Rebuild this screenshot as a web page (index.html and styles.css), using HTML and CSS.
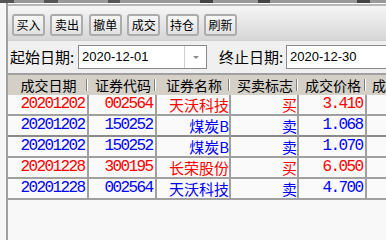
FILE: index.html
```html
<html>
<head>
    <meta charset="utf-8">
    <link rel="stylesheet" href="styles.css">
</head>
<body>
    <div class="tabs"></div>
    <div class="frame">
        <div class="side"></div>
        <div class="main">
            <div class="toolbar">
                <button class="tool">买入</button>
                <button class="tool">卖出</button>
                <button class="tool">撤单</button>
                <button class="tool">成交</button>
                <button class="tool">持仓</button>
                <button class="tool">刷新</button>
            </div>
            <div class="filter">
                <span class="label">起始日期:</span>
                <div class="combo">
                    <span class="value">2020-12-01</span>
                    <span class="drop"><i class="arrow"></i></span>
                </div>
                <span class="label label-end">终止日期:</span>
                <div class="date-box">
                    <span class="value">2020-12-30</span>
                </div>
            </div>
            <div class="grid">
                <div class="grid-head">
                    <div class="th">成交日期</div>
                    <div class="th">证券代码</div>
                    <div class="th">证券名称</div>
                    <div class="th">买卖标志</div>
                    <div class="th">成交价格</div>
                    <div class="th">成交数量</div>
                </div>
                <div class="grid-row buy">
                    <div class="td num">20201202</div>
                    <div class="td num">002564</div>
                    <div class="td cn">天沃科技</div>
                    <div class="td cn">买</div>
                    <div class="td num">3.410</div>
                    <div class="td"></div>
                </div>
                <div class="grid-row sell">
                    <div class="td num">20201202</div>
                    <div class="td num">150252</div>
                    <div class="td cn">煤炭B</div>
                    <div class="td cn">卖</div>
                    <div class="td num">1.068</div>
                    <div class="td"></div>
                </div>
                <div class="grid-row sell">
                    <div class="td num">20201202</div>
                    <div class="td num">150252</div>
                    <div class="td cn">煤炭B</div>
                    <div class="td cn">卖</div>
                    <div class="td num">1.070</div>
                    <div class="td"></div>
                </div>
                <div class="grid-row buy">
                    <div class="td num">20201228</div>
                    <div class="td num">300195</div>
                    <div class="td cn">长荣股份</div>
                    <div class="td cn">买</div>
                    <div class="td num">6.050</div>
                    <div class="td"></div>
                </div>
                <div class="grid-row sell">
                    <div class="td num">20201228</div>
                    <div class="td num">002564</div>
                    <div class="td cn">天沃科技</div>
                    <div class="td cn">卖</div>
                    <div class="td num">4.700</div>
                    <div class="td"></div>
                </div>
            </div>
        </div>
    </div>
</body>
</html>
```

FILE: styles.css
```css
:root {
    --def-ui: "Noto Sans CJK SC", sans-serif;
    --def-line: #a0a0a0;
}

* {
    box-sizing: border-box;
    margin: 0px;
    padding: 0px;
}

body {
    width: 386px;
    height: 240px;
    overflow: hidden;
    background-color: #f8f8f8;
    font-family: var(--def-ui);
    color: #000;
}

.tabs {
    height: 3px;
    background: linear-gradient(90deg,
        #555 0 14px, #9a9a9a 14px 44px, #555 44px 58px, #9a9a9a 58px 108px,
        #555 108px 120px, #9a9a9a 120px 200px, #444 200px 213px,
        #9a9a9a 213px 258px, #444 258px 270px, #9a9a9a 270px 357px,
        #444 357px 370px, #9a9a9a 370px);
}

.frame {
    display: flex;
    height: 237px;
}

.side {
    width: 8px;
    flex-shrink: 0;
    background-color: #f6f6f6;
    border-right: 2px solid var(--def-line);
}

.main {
    flex: 1;
    overflow: hidden;
}

/* toolbar */

.toolbar {
    display: flex;
    gap: 5.4px;
    height: 37px;
    padding: 10px 0px 0px 4px;
    border-top: 1px solid #fcfcfc;
    background: linear-gradient(#b8b8b8 0 2px, #f6f6f6 2px, #d6d6d6 100%);
}

.tool {
    width: 33px;
    height: 22px;
    font-family: var(--def-ui);
    font-size: 12px;
    line-height: 18px;
    color: #000;
    background: linear-gradient(#f7f7f7, #e2e2e2);
    border: 2px solid #acacac;
    border-radius: 3px;
}

/* date filter */

.filter {
    display: flex;
    align-items: center;
    height: 33px;
    padding-left: 2px;
    background-color: #f0f0f0;
    border-top: 1px solid #cfcfcf;
}

.label {
    width: 68px;
    flex-shrink: 0;
    font-size: 15px;
    line-height: 20px;
    white-space: nowrap;
}

.label-end {
    width: 67px;
    margin-left: 12px;
}

.combo, .date-box {
    display: flex;
    height: 24px;
    flex-shrink: 0;
    background-color: #fff;
    border: 1px solid #8a8a8a;
}

.combo {
    width: 129px;
}

.date-box {
    width: 140px;
}

.value {
    flex: 1;
    padding-left: 3px;
    font-family: "Liberation Sans", sans-serif;
    font-size: 13px;
    line-height: 22px;
}

.drop {
    display: flex;
    align-items: center;
    justify-content: center;
    width: 22px;
    border-left: 1px solid #cfcfcf;
}

.arrow {
    border-left: 3px solid transparent;
    border-right: 3px solid transparent;
    border-top: 3px solid #8c8c8c;
}

/* grid */

.grid {
    width: 500px;
    border-top: 2px solid var(--def-line);
}

.grid-head, .grid-row {
    display: grid;
    grid-template-columns: 81px 68px 74px 68px 68px 66px;
}

.grid-head {
    height: 20px;
    background-color: #d4d0c8;
}

.th {
    font-size: 14px;
    line-height: 20px;
    text-align: center;
    white-space: nowrap;
    background:
        linear-gradient(#808080, #808080) right 2px top 4px / 1px 12px no-repeat,
        linear-gradient(#fff, #fff) right 1px top 4px / 1px 12px no-repeat;
}

.grid-row {
    height: 21px;
    background-color: #fafafa;
}

.grid-row:nth-child(3) .td {
    border-bottom-color: #8a8a8a;
}

.td {
    height: 21px;
    text-align: right;
    white-space: nowrap;
    overflow: hidden;
    border-right: 2px solid var(--def-line);
    border-bottom: 2px solid var(--def-line);
}

.num {
    padding-right: 1px;
    font-family: "Liberation Mono", monospace;
    font-size: 16px;
    letter-spacing: -1.6px;
    line-height: 19px;
}

.num::after {
    content: "";
    padding-left: 1.6px;
}

.cn {
    font-size: 15px;
    line-height: 19px;
}

.buy {
    color: #f00;
}

.sell {
    color: #00f;
}
```
